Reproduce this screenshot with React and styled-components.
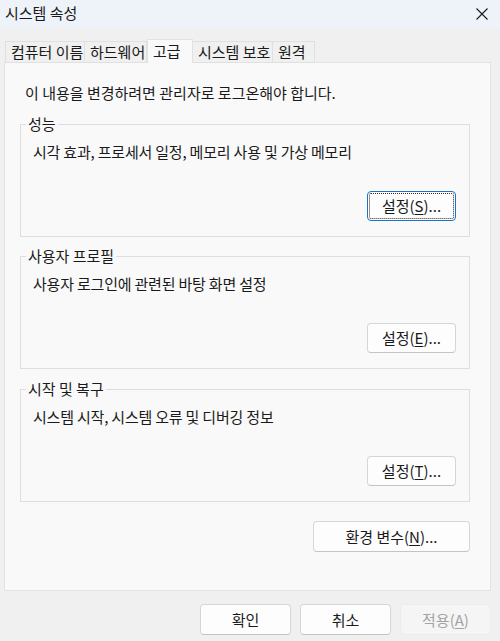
import React from "react";
import styled, { createGlobalStyle } from "styled-components";

const Global = createGlobalStyle`
  html, body { margin: 0; padding: 0; background: #f0f0f0; overflow: hidden; }
  body { font-family: "Noto Sans CJK KR", "Noto Sans", sans-serif; color: #1a1a1a; font-size: 15px; }
  * { box-sizing: border-box; }
`;

const Window = styled.div`
  width: 500px;
  height: 641px;
  display: flex;
  flex-direction: column;
  background: #f0f0f0;
`;

const TitleBar = styled.div`
  height: 29px;
  background: #eef3f9;
  display: flex;
  align-items: center;
  justify-content: space-between;
  padding: 0 12px 3px 5px;
`;

const Title = styled.div`
  font-size: 15px;
  line-height: 20px;
  color: #1a1a1a;
`;

const CloseIcon = styled.svg`
  width: 12px;
  height: 12px;
  margin-top: 2px;
`;

const Body = styled.div`
  flex: 1;
  display: flex;
  flex-direction: column;
  padding: 10px 9px 0 4px;
`;

const TabRow = styled.div`
  display: flex;
  align-items: flex-end;
  padding-left: 1px;
  height: 24px;
  position: relative;
  z-index: 1;
  margin-bottom: -1px;
`;

const Tab = styled.div`
  width: ${p => p.$w}px;
  height: ${p => (p.$active ? 24 : 22)}px;
  line-height: 20px;
  padding: ${p => (p.$active ? "1px 0 0 5px" : "0 0 0 5px")};
  font-size: 15px;
  white-space: nowrap;
  background: ${p => (p.$active ? "#f9f9f9" : "#f0f0f0")};
  border: 1px solid ${p => (p.$active ? "#e2e2e2" : "#e0e0e0")};
  border-bottom: ${p => (p.$active ? "none" : "1px solid #e0e0e0")};
  border-left: ${p => (p.$first || p.$active ? undefined : "none")};
  ${p => p.$active && "border-left: 1px solid #e2e2e2;"}
  color: #1a1a1a;
`;

const Panel = styled.div`
  width: 487px;
  height: 529px;
  background: #f9f9f9;
  border: 1px solid #e3e3e3;
  display: flex;
  flex-direction: column;
  padding: 20px 20px 0 15px;
`;

const Intro = styled.div`
  margin-left: 5px;
  line-height: 20px;
  font-size: 15px;
`;

const Group = styled.fieldset`
  margin: ${p => p.$top}px 0 0 0;
  padding: 0;
  border: 1px solid #dedede;
  min-width: 0;
`;

const Legend = styled.legend`
  margin-left: 5px;
  padding: 0 2px 0 2px;
  line-height: 20px;
  font-size: 15px;
`;

const GroupBody = styled.div`
  display: flex;
  flex-direction: column;
  padding: 8px 13px 15px 12px;
`;

const Desc = styled.div`
  line-height: 20px;
  font-size: 15px;
  letter-spacing: -0.2px;
`;

const ButtonRow = styled.div`
  display: flex;
  justify-content: flex-end;
  margin-top: ${p => p.$top}px;
`;

const Button = styled.button`
  width: ${p => p.$w}px;
  height: ${p => p.$h}px;
  font-family: "Noto Sans CJK KR", "Noto Sans", sans-serif;
  font-size: 15px;
  line-height: 20px;
  padding: 0;
  border-radius: 4px;
  background: ${p => (p.$disabled ? "#f5f5f5" : "#fdfdfd")};
  color: ${p => (p.$disabled ? "#a3a3a3" : "#1a1a1a")};
  border: 1px solid ${p => (p.$focused ? "#1a73c6" : p.$disabled ? "#ececec" : "#d6d6d6")};
  border-bottom-color: ${p => (p.$focused ? "#1a73c6" : p.$disabled ? "#ececec" : "#c4c4c4")};
  position: relative;
  display: flex;
  align-items: center;
  justify-content: center;
  u { text-decoration-thickness: 1px; text-underline-offset: 2px; }
  ${p =>
    p.$focused &&
    `&::after {
      content: "";
      position: absolute;
      inset: 1px;
      border: 1px dotted #2b2b2b;
      border-radius: 2px;
    }`}
`;

const EnvRow = styled.div`
  display: flex;
  justify-content: flex-end;
  margin-top: 19px;
`;

const Footer = styled.div`
  display: flex;
  justify-content: flex-end;
  gap: 9px;
  padding-top: 13px;
`;

const tabs = [
  { label: "컴퓨터 이름", w: 80 },
  { label: "하드웨어", w: 62 },
  { label: "고급", w: 46, active: true },
  { label: "시스템 보호", w: 80 },
  { label: "원격", w: 42 },
];

const groups = [
  { title: "성능", desc: "시각 효과, 프로세서 일정, 메모리 사용 및 가상 메모리", key: "S", focused: true, top: 11 },
  { title: "사용자 프로필", desc: "사용자 로그인에 관련된 바탕 화면 설정", key: "E", top: 9 },
  { title: "시작 및 복구", desc: "시스템 시작, 시스템 오류 및 디버깅 정보", key: "T", top: 10 },
];

export default function App() {
  return (
    <Window>
      <Global />
      <TitleBar>
        <Title>시스템 속성</Title>
        <CloseIcon viewBox="0 0 12 12">
          <path d="M0.5 0.5 L11.5 11.5 M11.5 0.5 L0.5 11.5" stroke="#1a1a1a" strokeWidth="1.1" fill="none" />
        </CloseIcon>
      </TitleBar>
      <Body>
        <TabRow>
          {tabs.map((t, i) => (
            <Tab key={t.label} $w={t.w} $active={t.active} $first={i === 0}>
              {t.label}
            </Tab>
          ))}
        </TabRow>
        <Panel>
          <Intro>이 내용을 변경하려면 관리자로 로그온해야 합니다.</Intro>
          {groups.map(g => (
            <Group key={g.title} $top={g.top}>
              <Legend>{g.title}</Legend>
              <GroupBody>
                <Desc>{g.desc}</Desc>
                <ButtonRow $top={29}>
                  <Button $w={89} $h={30} $focused={g.focused}>
                    설정(<u>{g.key}</u>)...
                  </Button>
                </ButtonRow>
              </GroupBody>
            </Group>
          ))}
          <EnvRow>
            <Button $w={157} $h={31}>
              환경 변수(<u>N</u>)...
            </Button>
          </EnvRow>
        </Panel>
        <Footer>
          <Button $w={91} $h={31}>확인</Button>
          <Button $w={91} $h={31}>취소</Button>
          <Button $w={91} $h={31} $disabled>
            적용(<u>A</u>)
          </Button>
        </Footer>
      </Body>
    </Window>
  );
}
